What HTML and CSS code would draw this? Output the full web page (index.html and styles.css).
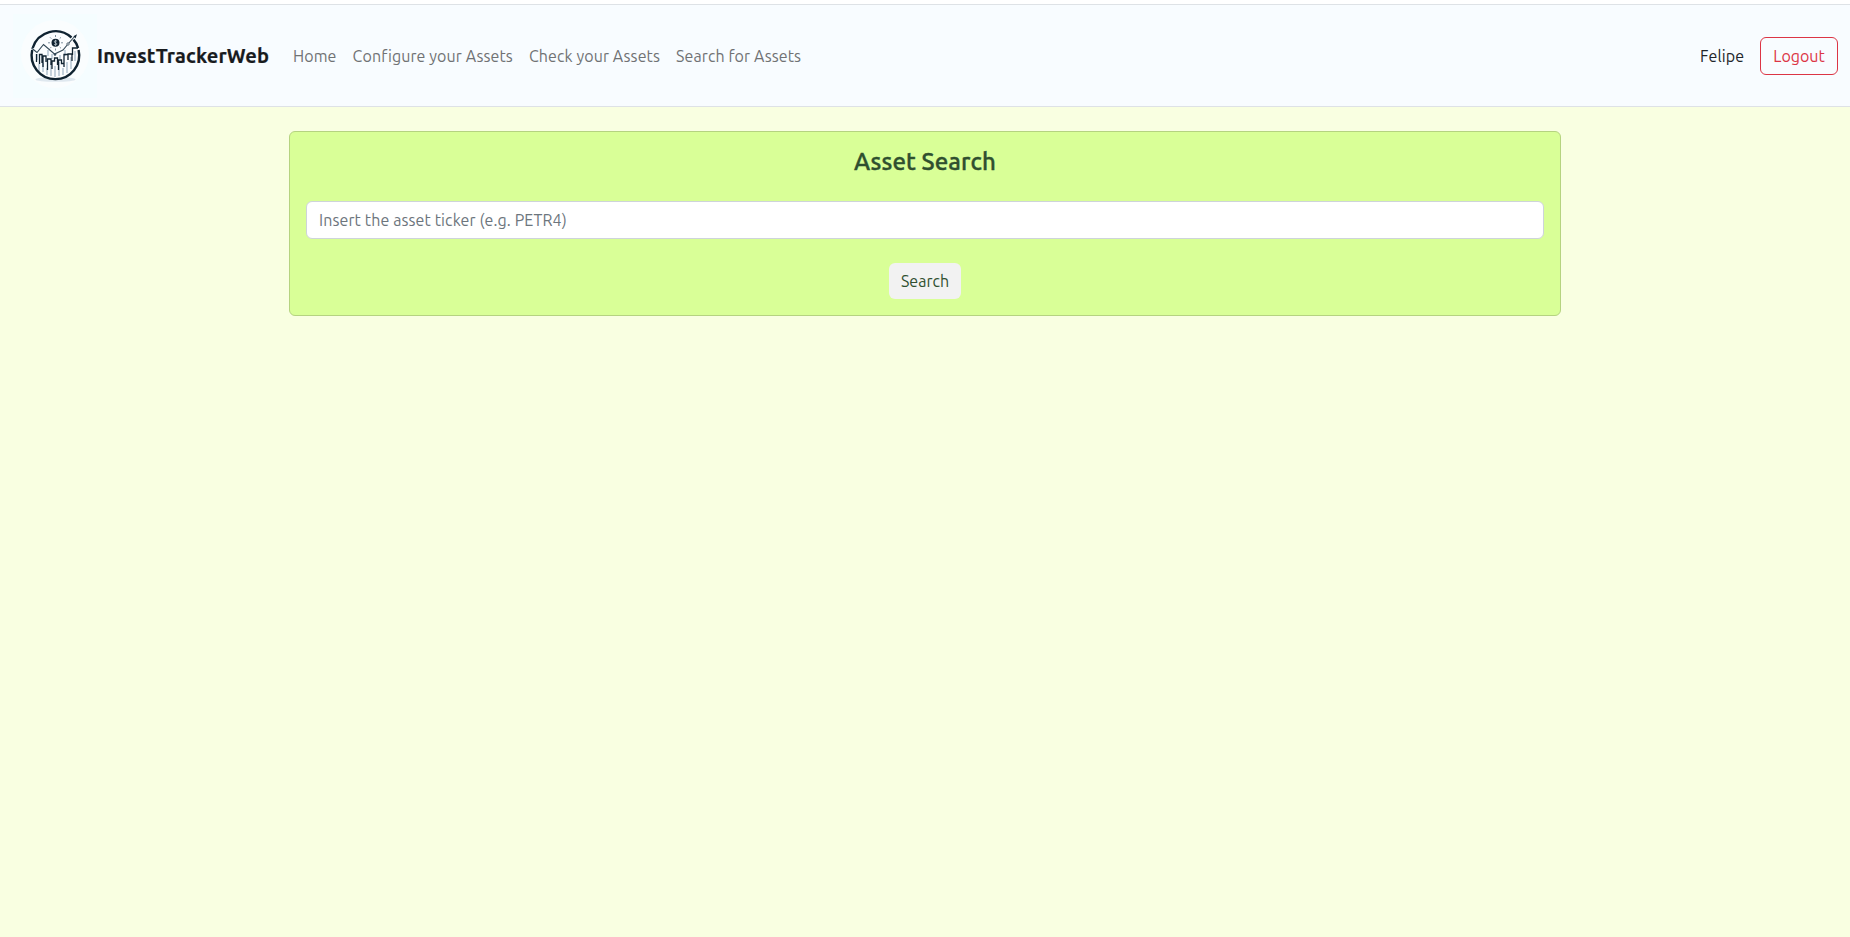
FILE: index.html
```html
<!DOCTYPE html>
<html lang="en">
<head>
<meta charset="utf-8">
<title>InvestTrackerWeb</title>
<link rel="stylesheet" href="styles.css">
</head>
<body>
<nav class="navbar">
  <a class="brand" href="#">
    <svg class="logo" viewBox="13 14 84 84" aria-hidden="true">
      <rect x="13" y="14" width="84" height="84" fill="#f5fdff"/>
      <circle cx="55" cy="54" r="34" fill="#fafdfe"/>
      <ellipse cx="55.5" cy="79.5" rx="20" ry="2.3" fill="#dfe8ef"/>
      <circle cx="55.4" cy="55.2" r="23.5" fill="#fbfdfe"/>
      <path d="M39 64v7M43 63v9M47 68v7M51 62v14M55 66v11M59 62v14M63 68v7M67 62v11M71 57v12M75 51v10M37 54v6M48 50v6M52 54v5M60 55v4M65 50v6" stroke="#bccbd7" stroke-width="1.7" fill="none"/>
      <path d="M32.700 48A23.800 23.800 0 0 1 71.500 37.500M73.500 39.600Q77 43.500 78.100 48" fill="none" stroke="#102331" stroke-width="2.400"/>
      <path d="M32.200 50A23.800 23.800 0 1 0 78.600 50" fill="none" stroke="#102331" stroke-width="2.400"/>
      <path d="M31.500 48L37 52.500 43.500 44.500 54.500 54 63 50 68 44 75 36" fill="none" stroke="#344957" stroke-width="1.100"/>
      <path d="M73.500 36.200L77 34.200 75.500 38.500Z" fill="#102331"/>
      <circle cx="68" cy="44" r="1.200" fill="#f8fcff" stroke="#344957" stroke-width=".8"/>
      <circle cx="55" cy="54.500" r="1.300" fill="#344957"/>
      <path d="M36.500 54v8M39.500 64V54.500H42V63M43 67V56H46V62M47.500 70V59H51V65M52 69V61H54.500V58H57.500V65M58.500 70V60H61.500V63.500H64V67M64 63V54.500H67.500M68 60V54H72V61M72.500 55V48H78" fill="none" stroke="#102331" stroke-width="1.300"/>
      <circle cx="55.500" cy="42.800" r="4" fill="#102331"/>
      <path d="M57 41.200Q55.500 40.200 54.300 41.300 54 42.500 55.600 42.800 57.300 43.300 56.800 44.500 55.500 45.400 54 44.400M55.500 39.800V45.800" fill="none" stroke="#dce7ed" stroke-width=".6"/>
      <path d="M55.500 35V37M55.500 48.500V50.500M48 42.800H50M61 42.800H63M50 37.300L51.300 38.600M61 37.300L59.700 38.600M50 48.300L51.300 47M61 48.300L59.700 47" stroke="#738795" stroke-width=".9"/>
    </svg>
    <span class="brand-name">InvestTrackerWeb</span>
  </a>
  <div class="links">
    <a class="link" href="#">Home</a>
    <a class="link" href="#">Configure your Assets</a>
    <a class="link" href="#">Check your Assets</a>
    <a class="link" href="#">Search for Assets</a>
  </div>
  <span class="user">Felipe</span>
  <button class="btn logout" type="button">Logout</button>
</nav>
<main class="container">
  <form class="card">
    <h1 class="title">Asset Search</h1>
    <input class="ticker" type="text" placeholder="Insert the asset ticker (e.g. PETR4)">
    <button class="btn search" type="button">Search</button>
  </form>
</main>
</body>
</html>
```
FILE: styles.css
```css
* { box-sizing: border-box; }
body {
  margin: 0;
  padding-top: 4px;
  min-height: 100vh;
  background: linear-gradient(#fff 4px, #f9ffe1 4px);
  color: #212529;
  font: 16px/24px Ubuntu, "Noto Sans", sans-serif;
}
a { color: inherit; text-decoration: none; }
.navbar {
  display: flex;
  align-items: center;
  height: 103px;
  padding: 0 12px 0 13px;
  background: #f8fcff;
  border-top: 1px solid #dee2e6;
  border-bottom: 1px solid #dee2e6;
}
.brand { display: flex; align-items: center; width: 272px; }
.logo { width: 84px; height: 84px; flex: none; }
.brand-name {
  color: #181b1e;
  font-size: 20px;
  font-weight: 700;
  letter-spacing: .19px;
  -webkit-text-stroke: .2px;
}
.links { display: flex; flex: 1; color: #707274; letter-spacing: .1px; }
.link { padding: 0 8px; white-space: nowrap; }
.user { width: 60px; letter-spacing: .1px; }
.btn { font: inherit; padding: 0; border-radius: 6px; }
.logout {
  width: 78px;
  height: 38px;
  color: #dc3545;
  background: transparent;
  border: 1px solid #dc3545;
}
.container { width: 1272px; margin: 24px auto 0; }
.card {
  display: flex;
  flex-direction: column;
  align-items: center;
  height: 185px;
  padding: 16px;
  background: #d9ff97;
  border: 1px solid #b5d380;
  border-radius: 6px;
}
.title {
  margin: 0 0 26px;
  color: #2f4f2f;
  font-size: 24px;
  font-weight: 500;
  line-height: 27px;
  letter-spacing: .1px;
  -webkit-text-stroke: .4px;
}
.ticker {
  width: 100%;
  height: 38px;
  padding: 0 12px;
  font: inherit;
  letter-spacing: .11px;
  background: #fff;
  border: 1px solid #ced4da;
  border-radius: 6px;
}
.ticker::placeholder { color: #6c757d; opacity: 1; }
.search {
  width: 72px;
  height: 36px;
  margin-top: 24px;
  color: #2f4f2f;
  background: #f2f2f2;
  border: 0;
}
```
